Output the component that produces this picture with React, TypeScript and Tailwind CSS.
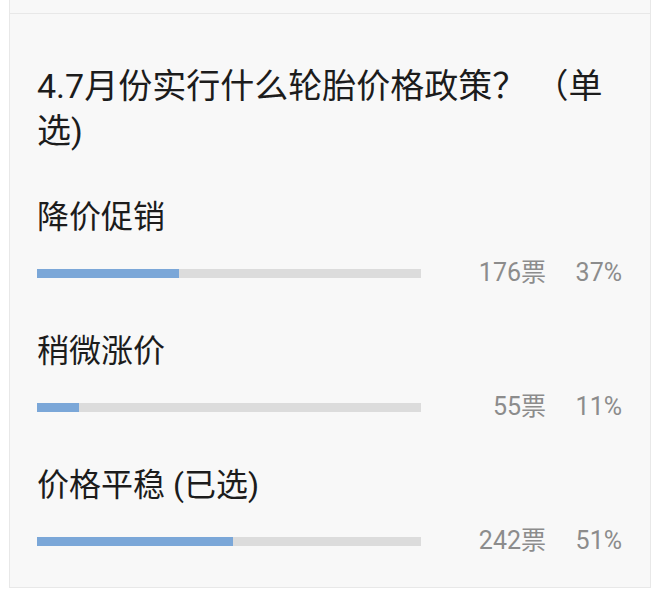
import React from "react";

const options = [
  { label: "降价促销", votes: 176, pct: 37 },
  { label: "稍微涨价", votes: 55, pct: 11 },
  { label: "价格平稳 (已选)", votes: 242, pct: 51 },
];

export default function App() {
  return (
    <div
      className="w-[660px] h-[589px] bg-white px-[9px] overflow-hidden"
      style={{ fontFamily: "Roboto, 'Noto Sans CJK SC', sans-serif" }}
    >
      <div className="flex flex-col border-x border-[#e8e8e8] bg-[#f8f8f8]">
        <div className="h-[14px] border-b border-[#e8e8e8]" />
        <div className="flex flex-col pl-[27px] pr-[28px] pt-[50px] pb-[31px] border-b border-[#e8e8e8]">
          <div className="text-[34px] leading-[45px] text-[#1c1c1c] pr-[4px]">
            4.7月份实行什么轮胎价格政策？ （单选)
          </div>
          <div className="flex flex-col gap-[41px] mt-[41px]">
            {options.map((o) => (
              <div key={o.label} className="flex flex-col gap-[19px]">
                <div className="text-[32px] leading-[44px] text-[#1c1c1c]">{o.label}</div>
                <div className="flex items-center h-[30px]">
                  <div className="w-[384px] h-[9px] bg-[#dcdcdc]">
                    <div className="h-full bg-[#7ba7d8]" style={{ width: `${o.pct}%` }} />
                  </div>
                  <div className="flex-1 text-right text-[25px] text-[#8c8c8c] leading-[30px]">
                    {o.votes}票
                  </div>
                  <div className="w-[76px] text-right text-[25px] text-[#8c8c8c] leading-[30px]">
                    {o.pct}%
                  </div>
                </div>
              </div>
            ))}
          </div>
        </div>
      </div>
    </div>
  );
}
